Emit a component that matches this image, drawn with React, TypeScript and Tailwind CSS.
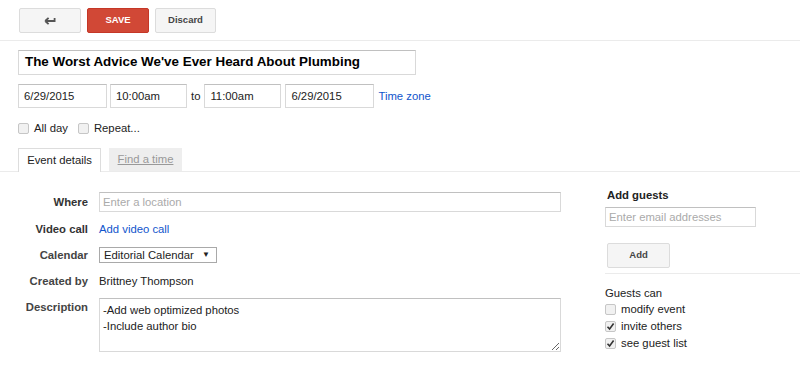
import React from "react";

const Check = ({ checked, label }: { checked?: boolean; label: string }) => (
  <label className="flex items-center gap-[5px]">
    <span className="w-[11px] h-[11px] border border-[#c6c6c6] rounded-[2px] bg-[#f1f1f1] flex items-center justify-center">
      {checked && (
        <svg width="9" height="9" viewBox="0 0 9 9">
          <path d="M1.5 4.8 L3.6 7 L7.6 1.6" fill="none" stroke="#333" strokeWidth="1.6" />
        </svg>
      )}
    </span>
    <span>{label}</span>
  </label>
);

const GrayButton = ({ children, w }: { children: React.ReactNode; w: string }) => (
  <button className={`${w} h-[25px] rounded-[2px] border border-[#dcdcdc] bg-[#f5f5f5] text-[9.5px] font-bold text-[#444] flex items-center justify-center`}>
    {children}
  </button>
);

export default function App() {
  return (
    <div className="w-[800px] h-[372px] overflow-hidden bg-white text-[11.3px] text-[#222] font-['Liberation_Sans',Arial,sans-serif]">
      {/* toolbar */}
      <div className="h-[41px] border-b border-[#ebebeb] pt-[8px] pl-[19px] flex gap-[6px]">
        <GrayButton w="w-[62px]">
          <svg width="12" height="9" viewBox="0 0 12 9">
            <path d="M1.2 5 L4.6 1.8 M1.2 5 L4.6 8.2 M1.2 5 H10.6 V2" fill="none" stroke="#555" strokeWidth="1.8" />
          </svg>
        </GrayButton>
        <button className="w-[62px] h-[25px] rounded-[2px] border border-[#c53727] bg-[#d14836] text-[9.5px] font-bold text-white">
          SAVE
        </button>
        <GrayButton w="w-[61px]">Discard</GrayButton>
      </div>

      {/* title */}
      <div className="mt-[9px] ml-[18px] w-[398px] h-[25px] border border-[#d9d9d9] border-t-[#c0c0c0] px-[6px] flex items-center text-[13.4px] font-bold text-black">
        The Worst Advice We've Ever Heard About Plumbing
      </div>

      {/* dates */}
      <div className="mt-[9px] ml-[18px] h-[24px] flex items-center">
        <div className="w-[89px] h-[24px] border border-[#d9d9d9] border-t-[#c0c0c0] px-[5px] flex items-center">6/29/2015</div>
        <div className="ml-[3px] w-[77px] h-[24px] border border-[#d9d9d9] border-t-[#c0c0c0] px-[5px] flex items-center">10:00am</div>
        <span className="mx-[4px]">to</span>
        <div className="w-[77px] h-[24px] border border-[#d9d9d9] border-t-[#c0c0c0] px-[5px] flex items-center">11:00am</div>
        <div className="ml-[4px] w-[89px] h-[24px] border border-[#d9d9d9] border-t-[#c0c0c0] px-[5px] flex items-center">6/29/2015</div>
        <a className="ml-[4px] text-[#1155cc]">Time zone</a>
      </div>

      {/* all day / repeat */}
      <div className="mt-[14px] ml-[18px] h-[13px] flex items-center gap-[10px]">
        <Check label="All day" />
        <Check label="Repeat..." />
      </div>

      {/* tabs */}
      <div className="mt-[13px] h-[24px] border-b border-[#ebebeb] pl-[18px] flex items-end gap-[8px]">
        <div className="w-[83px] h-[24px] mb-[-1px] border border-b-0 border-[#dddddd] bg-white flex items-center justify-center">
          Event details
        </div>
        <div className="w-[73px] h-[23px] bg-[#eeeeee] text-[#999] underline flex items-center justify-center">
          Find a time
        </div>
      </div>

      {/* body */}
      <div className="flex">
        <div className="w-[561px] pt-[20px] flex flex-col">
          <div className="flex items-center h-[20px]">
            <span className="w-[88px] text-right font-bold text-[#333]">Where</span>
            <input
              className="ml-[11px] w-[462px] h-[20px] border border-[#d9d9d9] border-t-[#c0c0c0] px-[3px] outline-none placeholder:text-[#aaa]"
              placeholder="Enter a location"
            />
          </div>
          <div className="mt-[9px] flex items-center h-[16px]">
            <span className="w-[88px] text-right font-bold text-[#333]">Video call</span>
            <a className="ml-[11px] text-[#1155cc]">Add video call</a>
          </div>
          <div className="mt-[10px] flex items-center h-[16px]">
            <span className="w-[88px] text-right font-bold text-[#444]">Calendar</span>
            <div className="ml-[11px] w-[118px] h-[16px] border border-[#a9a9a9] pl-[4px] pr-[6px] flex items-center justify-between">
              <span>Editorial Calendar</span>
              <span className="text-[8px]">▼</span>
            </div>
          </div>
          <div className="mt-[10px] flex items-center h-[16px]">
            <span className="w-[88px] text-right font-bold text-[#444]">Created by</span>
            <span className="ml-[11px]">Brittney Thompson</span>
          </div>
          <div className="mt-[9px] flex items-start">
            <span className="w-[88px] text-right font-bold text-[#444] pt-[1px]">Description</span>
            <textarea
              className="ml-[11px] w-[462px] h-[54px] border border-[#d9d9d9] border-t-[#c0c0c0] px-[3px] pt-[3px] leading-[16px] outline-none"
              defaultValue={"-Add web optimized photos\n-Include author bio"}
            />
          </div>
        </div>

        <div className="ml-[44px] flex-1 pt-[16px] flex flex-col">
          <div className="ml-[2px] h-[14px] font-bold flex items-center">Add guests</div>
          <input
            className="mt-[5px] w-[151px] h-[20px] border border-[#d9d9d9] border-t-[#c0c0c0] px-[3px] outline-none placeholder:text-[#aaa]"
            placeholder="Enter email addresses"
          />
          <div className="mt-[16px] ml-[2px]">
            <GrayButton w="w-[63px]">Add</GrayButton>
          </div>
          <div className="mt-[5px] border-t border-[#ebebeb]" />
          <div className="mt-[12px] h-[14px] flex items-center">Guests can</div>
          <div className="mt-[3px] flex flex-col gap-[4px] leading-[13px]">
            <Check label="modify event" />
            <Check checked label="invite others" />
            <Check checked label="see guest list" />
          </div>
        </div>
      </div>
    </div>
  );
}
